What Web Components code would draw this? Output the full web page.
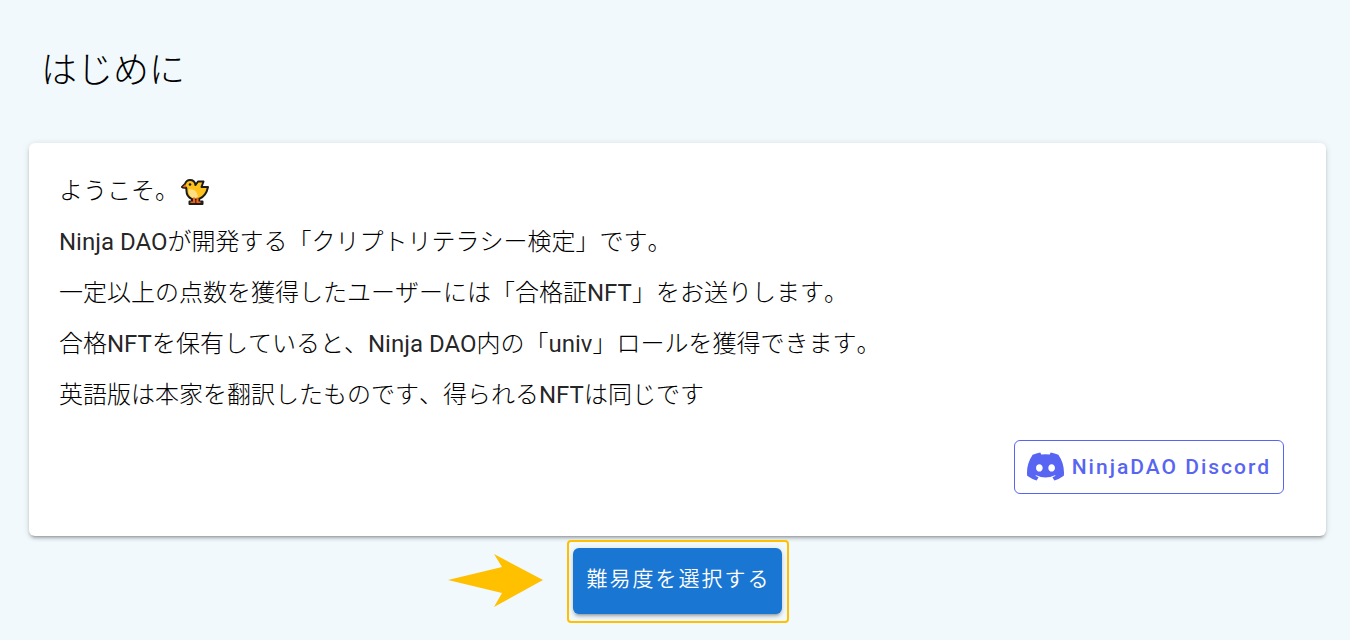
<!DOCTYPE html>
<html lang="ja">
<head>
<meta charset="utf-8">
<meta name="viewport" content="width=device-width, initial-scale=1">
<title>はじめに</title>
<style>
  body {
    margin: 0;
    background: #f1f9fd;
    color: rgba(0, 0, 0, 0.87);
    font-family: Roboto, "Noto Sans CJK JP", sans-serif;
    font-size: 24px;
    line-height: 27px;
  }

  /* slotted text: thin kana and kanji, regular latin */
  info-card p { margin: 0; color: #000; font-weight: 300; font-kerning: none; }
  info-card p span { color: rgba(0, 0, 0, 0.87); font-weight: 400; font-kerning: normal; }
</style>
</head>
<body>
<intro-page>
  <span slot="title">はじめに</span>
  <info-card>
    <p>ようこそ。<chick-icon></chick-icon></p>
    <p><span lang="en">Ninja DAO</span>が開発する「クリプトリテラシー検定」です。</p>
    <p>一定以上の点数を獲得したユーザーには「合格証<span lang="en">NFT</span>」をお送りします。</p>
    <p>合格<span lang="en">NFT</span>を保有していると、<span lang="en">Ninja DAO</span>内の「<span lang="en">univ</span>」ロールを獲得できます。</p>
    <p>英語版は本家を翻訳したものです、得られる<span lang="en">NFT</span>は同じです</p>
    <discord-link slot="action">NinjaDAO Discord</discord-link>
  </info-card>
  <hint-box slot="next">
    <start-button>難易度を選択する</start-button>
  </hint-box>
</intro-page>

<script>
// cała strona: tytuł, karta, przycisk
class IntroPage extends HTMLElement {
  constructor() {
    super();
    this.attachShadow({ mode: 'open' });
    this.shadowRoot.innerHTML = `
      <style>
        :host { display: block; }
        h1 {
          margin: 0;
          padding: 50px 41px;
          color: #000;
          font-size: 36px;
          font-weight: 300;
          line-height: 43px;
        }
        main { padding: 0 24px 0 29px; }
        footer { display: flex; justify-content: center; padding-top: 4px; }
      </style>
      <h1><slot name="title"></slot></h1>
      <main>
        <slot></slot>
        <footer><slot name="next"></slot></footer>
      </main>
    `;
  }
}

// biała karta z tekstem
class InfoCard extends HTMLElement {
  constructor() {
    super();
    this.attachShadow({ mode: 'open' });
    this.shadowRoot.innerHTML = `
      <style>
        :host {
          display: block;
          padding: 35px 42px 42px 30px;
          background: #fff;
          border-radius: 6px;
          box-shadow: 0 4px 2px -3px rgba(0, 0, 0, 0.2),
            0 3px 3px rgba(0, 0, 0, 0.14),
            0 1px 7px rgba(0, 0, 0, 0.12);
        }
        .text { display: grid; gap: 24px; }
        .action { display: flex; justify-content: flex-end; padding-top: 31px; }
      </style>
      <div class="text"><slot></slot></div>
      <div class="action"><slot name="action"></slot></div>
    `;
  }
}

// ikona kurczaka w tekście
class ChickIcon extends HTMLElement {
  constructor() {
    super();
    this.attachShadow({ mode: 'open' });
    this.shadowRoot.innerHTML = `
      <style>
        :host { display: inline-block; height: 27px; margin-left: 2px; vertical-align: top; }
        svg { display: block; }
      </style>
      <svg width="28" height="27" viewBox="0 0 28 27" role="img" aria-label="🐤">
        <path d="M8.500 23.500H11V20h7v3.500h3.500V26h-13z" fill="#5c3428" stroke="#1c1c1c" stroke-width="2" stroke-linejoin="round"/>
        <path d="M1 9 4 6C5 3 7 2 9 2c3 0 5 2 5.500 5L17 3.500h5.500L20.500 9H27c-1 5-4 10-9 12h-7c-3.500-1.500-5.500-4.500-5.500-8 0-1.500 0-2.500-.5-3.500C3.500 10 2 10 1 9z" fill="#ffc21a" stroke="#1c1c1c" stroke-width="2" stroke-linejoin="round"/>
        <path d="M1.500 9 4.500 6v3.500z" fill="#f7630c"/>
        <path d="M7.500 11.500c5-1 9.500 2 9.500 9h-5c-3-1.500-4.500-5-4.500-9z" fill="#ffdf85"/>
        <circle cx="9" cy="6.500" r="1.300" fill="#1c1c1c"/>
        <path d="M12 19.500h2V25H9.500v-1.500H12zM15.500 19.500h2v4h2V25h-4z" fill="#f7630c"/>
      </svg>
    `;
  }
}

// link do Discorda
class DiscordLink extends HTMLElement {
  constructor() {
    super();
    this.attachShadow({ mode: 'open' });
    this.shadowRoot.innerHTML = `
      <style>
        :host { display: block; }
        a {
          display: flex;
          align-items: center;
          gap: 8px;
          box-sizing: border-box;
          height: 54px;
          padding: 0 12px;
          border: 1px solid #5865f2;
          border-radius: 6px;
          color: #5865f2;
          font-size: 21px;
          font-weight: 500;
          letter-spacing: 2px;
          text-decoration: none;
        }
        svg { margin-bottom: 2px; }
      </style>
      <a href="#discord">
        <svg width="37" height="29" viewBox="0 0 127.140 96.360" fill="currentColor" aria-hidden="true">
          <path d="M107.700 8.070A105.150 105.150 0 0 0 81.470 0a72.060 72.060 0 0 0-3.360 6.830 97.680 97.680 0 0 0-29.110 0A72.370 72.370 0 0 0 45.640 0a105.890 105.890 0 0 0-26.250 8.090C2.790 32.650-1.710 56.600.54 80.210a105.730 105.730 0 0 0 32.170 16.150 77.700 77.700 0 0 0 6.890-11.110 68.420 68.420 0 0 1-10.850-5.180c.91-.66 1.800-1.340 2.660-2a75.570 75.570 0 0 0 64.320 0c.87.71 1.760 1.390 2.660 2a68.680 68.680 0 0 1-10.870 5.190 77 77 0 0 0 6.890 11.100 105.250 105.250 0 0 0 32.190-16.140c2.640-27.380-4.510-51.110-18.900-72.150zM42.450 65.690C36.180 65.690 31 60 31 53s5-12.740 11.430-12.740S54 46 53.890 53s-5.050 12.690-11.440 12.690zm42.240 0C78.410 65.690 73.250 60 73.250 53s5-12.740 11.440-12.740S96.230 46 96.120 53s-5.040 12.690-11.430 12.690z"/>
        </svg>
        <span><slot></slot></span>
      </a>
    `;
  }
}

// niebieski przycisk
class StartButton extends HTMLElement {
  constructor() {
    super();
    this.attachShadow({ mode: 'open' });
    this.shadowRoot.innerHTML = `
      <style>
        :host { display: block; }
        button {
          display: block;
          height: 66px;
          padding: 0 11px 4px 14px;
          border: 0;
          border-radius: 6px;
          background: #1976d2;
          color: #fff;
          font: inherit;
          font-size: 21px;
          font-weight: 350;
          letter-spacing: 2px;
          box-shadow: 0 4px 2px -3px rgba(0, 0, 0, 0.2),
            0 3px 3px rgba(0, 0, 0, 0.14),
            0 1px 7px rgba(0, 0, 0, 0.12);
        }
      </style>
      <button type="button"><slot></slot></button>
    `;
  }
}

// żółta ramka i strzałka obok przycisku
class HintBox extends HTMLElement {
  constructor() {
    super();
    this.attachShadow({ mode: 'open' });
    this.shadowRoot.innerHTML = `
      <style>
        :host {
          display: block;
          position: relative;
          padding: 6px 5px 7px 4px;
          border: 2px solid #ffc000;
          border-radius: 4px;
        }
        svg { position: absolute; right: 100%; top: 12px; margin-right: 26px; }
      </style>
      <svg width="95" height="53" viewBox="0 0 95 53" aria-hidden="true">
        <path d="M0 26 54 13 46 0 95 26 46 53 54 39z" fill="#ffc000"/>
      </svg>
      <slot></slot>
    `;
  }
}

customElements.define('intro-page', IntroPage);
customElements.define('info-card', InfoCard);
customElements.define('chick-icon', ChickIcon);
customElements.define('discord-link', DiscordLink);
customElements.define('start-button', StartButton);
customElements.define('hint-box', HintBox);
</script>
</body>
</html>
